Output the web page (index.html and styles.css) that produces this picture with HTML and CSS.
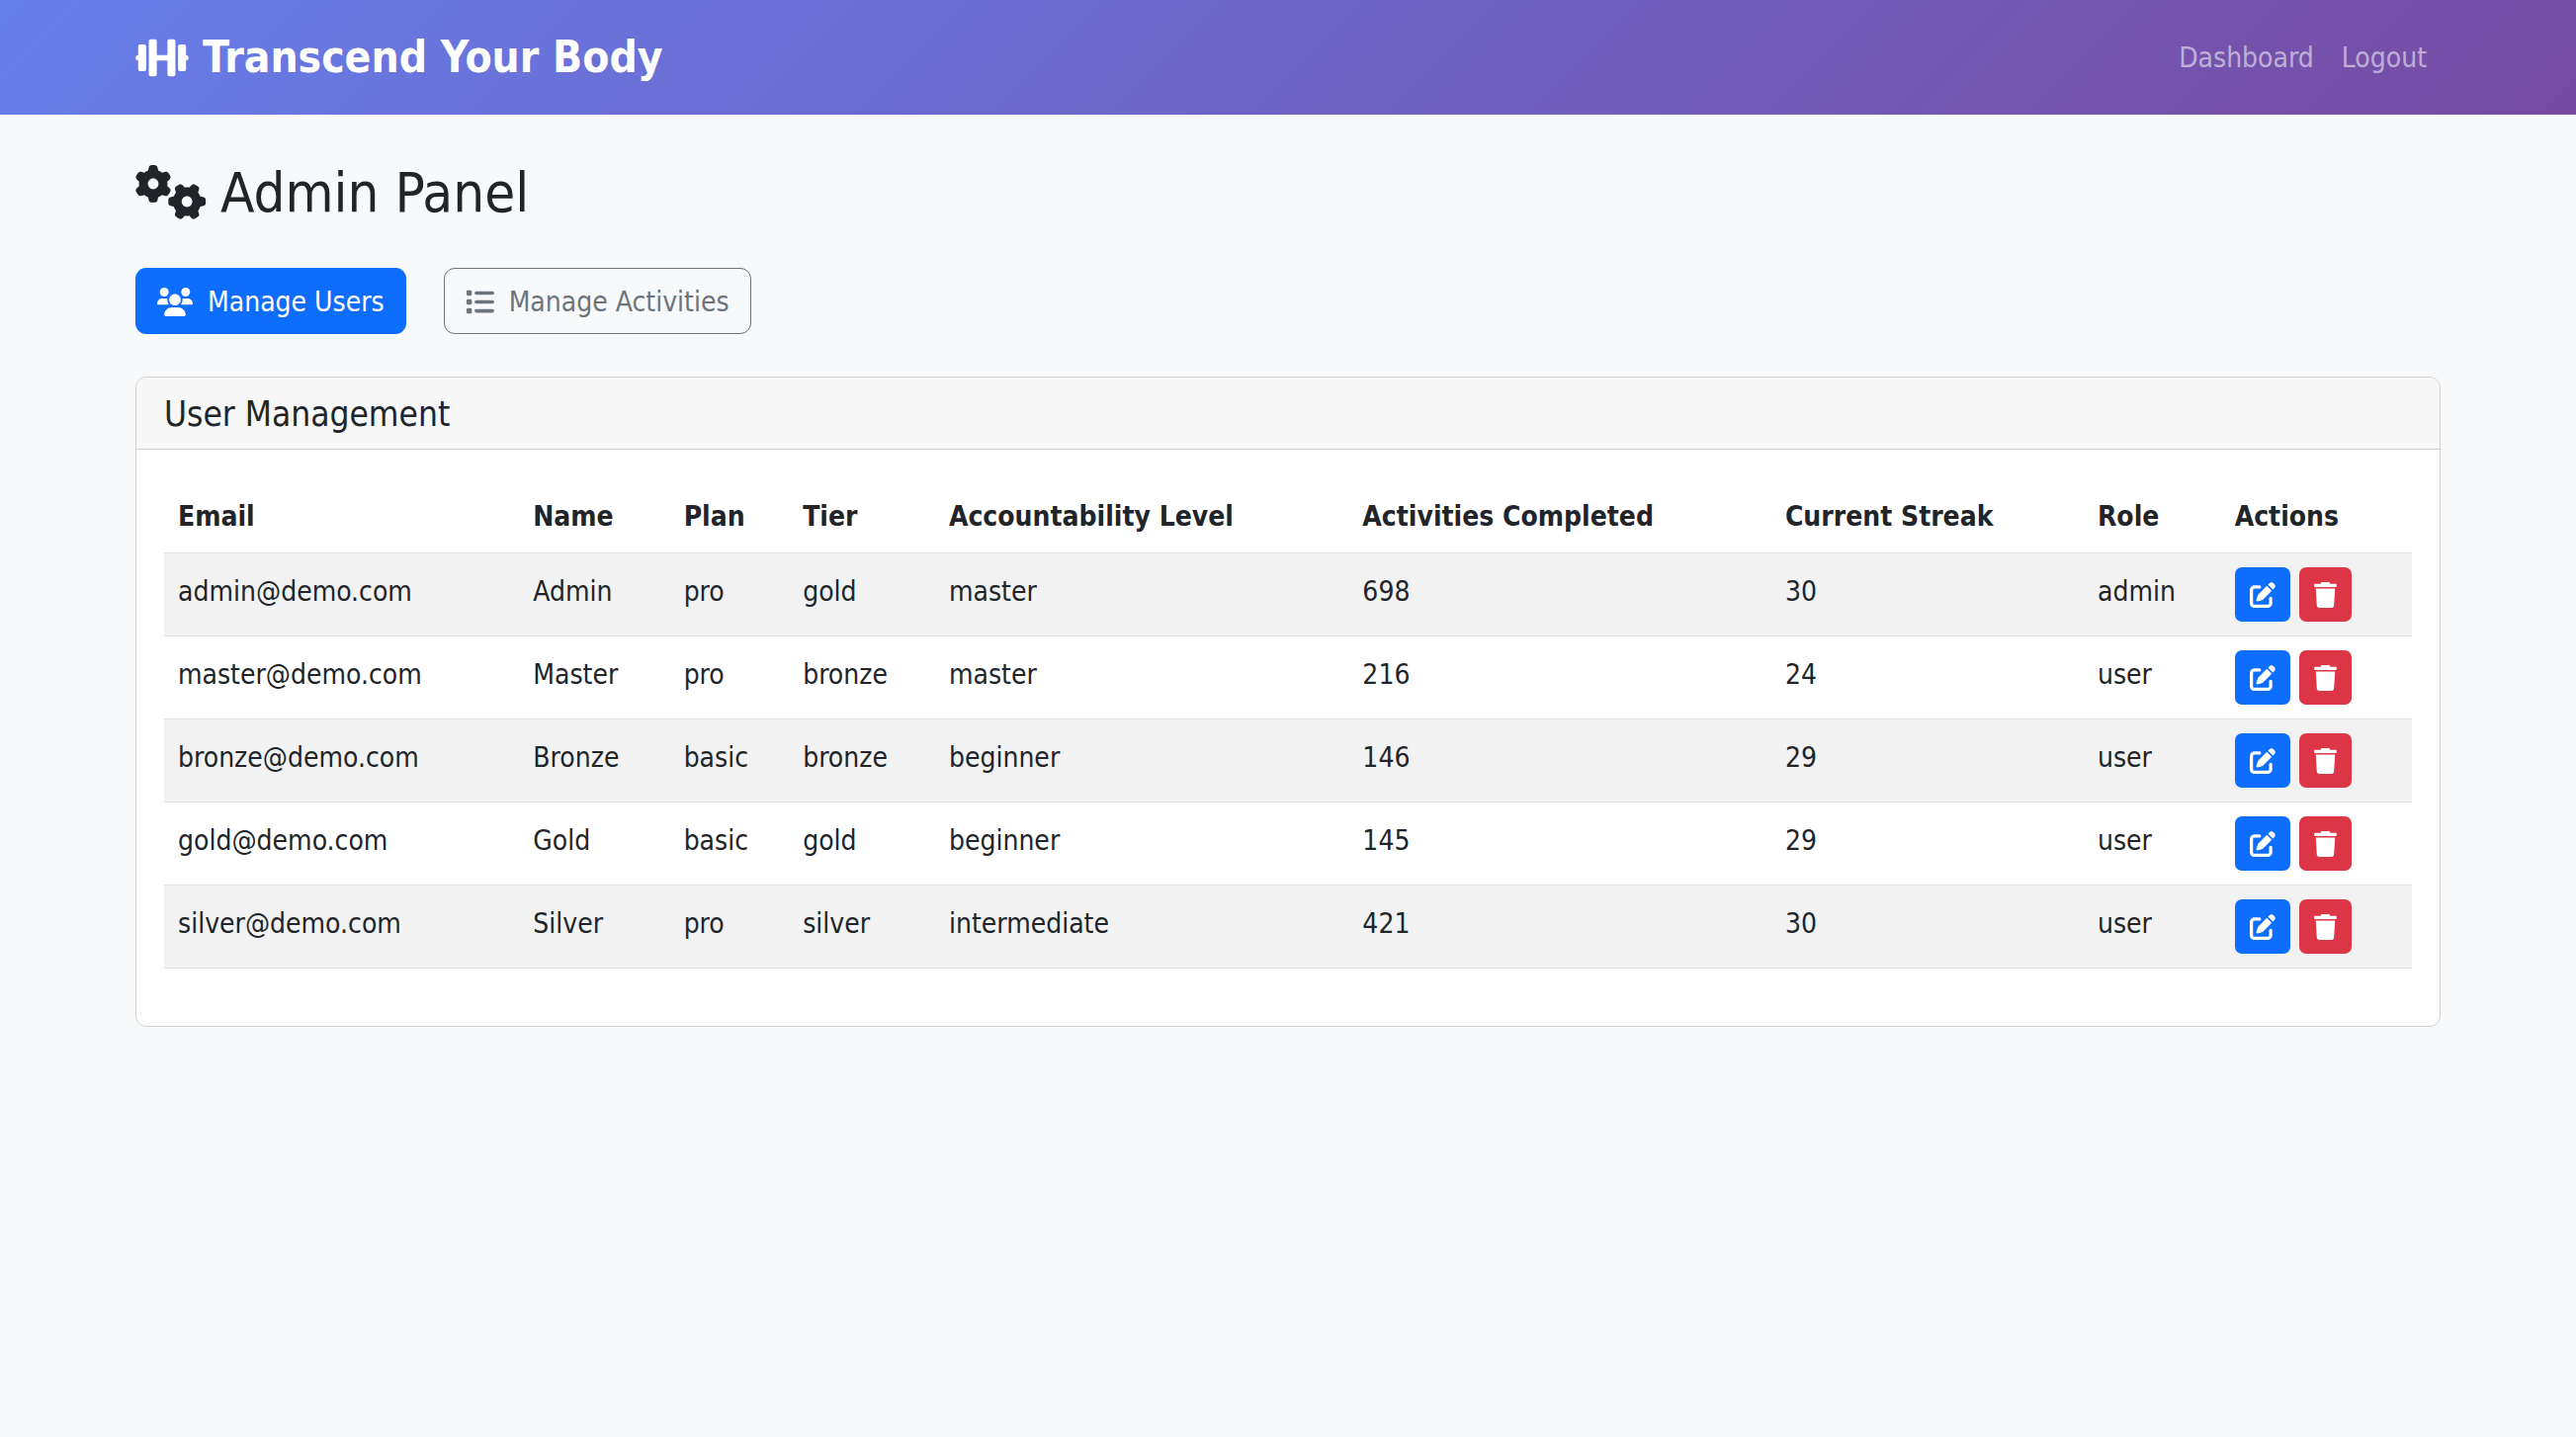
FILE: index.html
```html
<!DOCTYPE html>
<html lang="en">
<head>
<meta charset="utf-8">
<meta name="viewport" content="width=device-width, initial-scale=1">
<title>Admin Panel - Transcend Your Body</title>
<link rel="stylesheet" href="styles.css">
</head>
<body>
<svg class="sprite" aria-hidden="true">
  <symbol id="i-dumbbell" viewBox="0 0 640 512"><path d="M104 96h-48C42.75 96 32 106.8 32 120V224C14.33 224 0 238.3 0 256c0 17.67 14.33 32 32 32v104C32 405.3 42.75 416 56 416h48C117.3 416 128 405.3 128 392v-272C128 106.8 117.3 96 104 96zM456 32h-48C394.8 32 384 42.75 384 56V224H256V56C256 42.75 245.3 32 232 32h-48C170.8 32 160 42.75 160 56v400C160 469.3 170.8 480 184 480h48C245.3 480 256 469.3 256 456V288h128v168c0 13.25 10.75 24 24 24h48c13.25 0 24-10.75 24-24V56C480 42.75 469.3 32 456 32zM608 224V120C608 106.8 597.3 96 584 96h-48C522.8 96 512 106.8 512 120v272c0 13.25 10.75 24 24 24h48c13.25 0 24-10.75 24-24V288c17.67 0 32-14.33 32-32C640 238.3 625.7 224 608 224z"/></symbol>
  <symbol id="i-gears" viewBox="0 0 640 512">
    <path id="gear" d="M286.3 155.1C287.4 161.9 288 168.9 288 176C288 183.1 287.4 190.1 286.3 196.9L308.5 216.7C315.5 223 318.4 232.1 314.7 241.7C312.4 246.9 309.9 252.2 307.1 257.2L304 262.6C301 267.6 297.7 272.4 294.2 277.1C288.5 284.7 278.5 287.2 269.5 284.2L241.2 274.9C230.5 283.8 218.3 290.9 205 295.9L198.1 324.9C197 334.2 189.8 341.6 180.4 342.8C173.7 343.6 166.9 344 160 344C153.1 344 146.3 343.6 139.6 342.8C130.2 341.6 122.1 334.2 121 324.9L114.1 295.9C101.7 290.9 89.5 283.8 78.75 274.9L50.53 284.2C41.54 287.2 31.52 284.7 25.82 277.1C22.28 272.4 18.98 267.5 15.94 262.5L12.92 257.2C10.13 252.2 7.592 247 5.324 241.7C1.62 232.1 4.458 223 11.52 216.7L33.7 196.9C32.58 190.1 32 183.1 32 176C32 168.9 32.58 161.9 33.7 155.1L11.52 135.3C4.458 128.1 1.62 119 5.324 110.3C7.592 105 10.13 99.79 12.92 94.76L15.95 89.51C18.98 84.46 22.28 79.58 25.82 74.89C31.52 67.34 41.54 64.83 50.53 67.79L78.75 77.09C89.5 68.25 101.7 61.13 114.1 56.15L121 27.08C122.1 17.8 130.2 10.37 139.6 9.231C146.3 8.418 153.1 8 160 8C166.9 8 173.7 8.418 180.4 9.23C189.8 10.37 197 17.8 198.1 27.08L205 56.15C218.3 61.13 230.5 68.25 241.2 77.09L269.5 67.79C278.5 64.83 288.5 67.34 294.2 74.89C297.7 79.56 301 84.42 304 89.44L307.1 94.83C309.9 99.84 312.4 105 314.7 110.3C318.4 119 315.5 128.1 308.5 135.3L286.3 155.1zM160 128C133.5 128 112 149.5 112 176C112 202.5 133.5 224 160 224C186.5 224 208 202.5 208 176C208 149.5 186.5 128 160 128z"/>
    <use href="#gear" transform="translate(464 336) rotate(90) translate(-160 -176)"/>
  </symbol>
  <symbol id="i-users" viewBox="0 0 640 512"><path d="M320 320c57.4 0 104-46.56 104-104c0-57.44-46.6-104-104-104c-57.4 0-104 46.56-104 104C216 273.4 262.5 320 320 320zM369.9 352H270.1C191.6 352 128 411.7 128 485.3C128 500.1 140.7 512 156.4 512h327.2C499.3 512 512 500.1 512 485.3C512 411.7 448.4 352 369.9 352zM512 160c44.18 0 80-35.82 80-80S556.2 0 512 0c-44.18 0-80 35.82-80 80S467.8 160 512 160zM183.9 216c0-5.449 .9824-10.63 1.609-15.91C174.6 194.1 162.6 192 149.9 192H88.08C39.44 192 0 233.8 0 285.1C0 295.7 7.887 304 17.62 304h199.5C196.7 280.2 183.9 249.7 183.9 216zM128 160c44.18 0 80-35.82 80-80S172.2 0 128 0C83.82 0 48 35.82 48 80S83.82 160 128 160zM551.9 192h-61.84c-12.8 0-24.88 3.037-35.86 8.24C454.8 205.5 455.8 210.6 455.8 216c0 33.71-12.78 64.21-33.16 88h199.7C632.1 304 640 295.7 640 285.1C640 233.8 600.6 192 551.9 192z"/></symbol>
  <symbol id="i-list" viewBox="0 0 512 512"><path d="M40 48h48a24 24 0 0 1 24 24v48a24 24 0 0 1-24 24H40a24 24 0 0 1-24-24V72a24 24 0 0 1 24-24zM192 64h288a32 32 0 0 1 0 64H192a32 32 0 0 1 0-64zM192 224h288a32 32 0 0 1 0 64H192a32 32 0 0 1 0-64zM192 384h288a32 32 0 0 1 0 64H192a32 32 0 0 1 0-64zM40 208h48a24 24 0 0 1 24 24v48a24 24 0 0 1-24 24H40a24 24 0 0 1-24-24v-48a24 24 0 0 1 24-24zM40 368h48a24 24 0 0 1 24 24v48a24 24 0 0 1-24 24H40a24 24 0 0 1-24-24v-48a24 24 0 0 1 24-24z"/></symbol>
  <symbol id="i-edit" viewBox="0 0 512 512"><path d="M490.3 40.4C512.2 62.27 512.2 97.73 490.3 119.6L460.3 149.7L362.3 51.72L392.4 21.66C414.3-.2135 449.7-.2135 471.6 21.66L490.3 40.4zM172.4 241.7L339.7 74.34L437.7 172.3L270.3 339.6C264.2 345.8 256.7 350.4 248.4 353.2L159.6 382.8C150.1 385.6 141.5 383.4 135 376.1C128.6 370.5 126.4 361 129.2 352.4L158.8 263.6C161.6 255.3 166.2 247.8 172.4 241.7zM192 64C209.7 64 224 78.33 224 96C224 113.7 209.7 128 192 128H96C78.33 128 64 142.3 64 160V416C64 433.7 78.33 448 96 448H352C369.7 448 384 433.7 384 416V320C384 302.3 398.3 288 416 288C433.7 288 448 302.3 448 320V416C448 469 405 512 352 512H96C42.98 512 0 469 0 416V160C0 107 42.98 64 96 64H192z"/></symbol>
  <symbol id="i-trash" viewBox="0 0 448 512"><path d="M53.21 467c1.562 24.84 23.02 45 47.9 45h245.8c24.88 0 46.33-20.16 47.9-45L416 128H32L53.21 467zM432 32H320l-11.58-23.16c-2.709-5.42-8.25-8.844-14.31-8.844H153.9c-6.061 0-11.6 3.424-14.31 8.844L128 32H16c-8.836 0-16 7.162-16 16V80c0 8.836 7.164 16 16 16h416c8.838 0 16-7.164 16-16V48C448 39.16 440.8 32 432 32z"/></symbol>
</svg>

<nav class="navbar">
  <div class="container navbar-inner">
    <a class="brand" href="#"><svg class="icon brand-icon" aria-hidden="true"><use href="#i-dumbbell"/></svg>Transcend Your Body</a>
    <div class="nav-links">
      <a class="nav-link" href="#">Dashboard</a>
      <a class="nav-link" href="#">Logout</a>
    </div>
  </div>
</nav>

<main class="container main">
  <h1 class="page-title"><svg class="icon title-icon" aria-hidden="true"><use href="#i-gears"/></svg>Admin Panel</h1>

  <div class="tabs">
    <button type="button" class="btn btn-primary"><svg class="icon users-icon" aria-hidden="true"><use href="#i-users"/></svg>Manage Users</button>
    <button type="button" class="btn btn-outline"><svg class="icon list-icon" aria-hidden="true"><use href="#i-list"/></svg>Manage Activities</button>
  </div>

  <section class="card">
    <header class="card-header"><h2 class="card-title">User Management</h2></header>
    <div class="card-body">
      <table class="table">
        <colgroup>
          <col class="col-email"><col class="col-name"><col class="col-plan"><col class="col-tier"><col class="col-level"><col class="col-completed"><col class="col-streak"><col class="col-role"><col class="col-actions">
        </colgroup>
        <thead>
          <tr><th scope="col">Email</th><th scope="col">Name</th><th scope="col">Plan</th><th scope="col">Tier</th><th scope="col">Accountability Level</th><th scope="col">Activities Completed</th><th scope="col">Current Streak</th><th scope="col">Role</th><th scope="col">Actions</th></tr>
        </thead>
        <tbody>
          <tr><td>admin@demo.com</td><td>Admin</td><td>pro</td><td>gold</td><td>master</td><td>698</td><td>30</td><td>admin</td>
            <td><div class="actions"><button type="button" class="btn-sm btn-primary" aria-label="Edit Admin"><svg class="icon edit-icon"><use href="#i-edit"/></svg></button><button type="button" class="btn-sm btn-danger" aria-label="Delete Admin"><svg class="icon trash-icon"><use href="#i-trash"/></svg></button></div></td></tr>
          <tr><td>master@demo.com</td><td>Master</td><td>pro</td><td>bronze</td><td>master</td><td>216</td><td>24</td><td>user</td>
            <td><div class="actions"><button type="button" class="btn-sm btn-primary" aria-label="Edit Master"><svg class="icon edit-icon"><use href="#i-edit"/></svg></button><button type="button" class="btn-sm btn-danger" aria-label="Delete Master"><svg class="icon trash-icon"><use href="#i-trash"/></svg></button></div></td></tr>
          <tr><td>bronze@demo.com</td><td>Bronze</td><td>basic</td><td>bronze</td><td>beginner</td><td>146</td><td>29</td><td>user</td>
            <td><div class="actions"><button type="button" class="btn-sm btn-primary" aria-label="Edit Bronze"><svg class="icon edit-icon"><use href="#i-edit"/></svg></button><button type="button" class="btn-sm btn-danger" aria-label="Delete Bronze"><svg class="icon trash-icon"><use href="#i-trash"/></svg></button></div></td></tr>
          <tr><td>gold@demo.com</td><td>Gold</td><td>basic</td><td>gold</td><td>beginner</td><td>145</td><td>29</td><td>user</td>
            <td><div class="actions"><button type="button" class="btn-sm btn-primary" aria-label="Edit Gold"><svg class="icon edit-icon"><use href="#i-edit"/></svg></button><button type="button" class="btn-sm btn-danger" aria-label="Delete Gold"><svg class="icon trash-icon"><use href="#i-trash"/></svg></button></div></td></tr>
          <tr><td>silver@demo.com</td><td>Silver</td><td>pro</td><td>silver</td><td>intermediate</td><td>421</td><td>30</td><td>user</td>
            <td><div class="actions"><button type="button" class="btn-sm btn-primary" aria-label="Edit Silver"><svg class="icon edit-icon"><use href="#i-edit"/></svg></button><button type="button" class="btn-sm btn-danger" aria-label="Delete Silver"><svg class="icon trash-icon"><use href="#i-trash"/></svg></button></div></td></tr>
        </tbody>
      </table>
    </div>
  </section>
</main>
</body>
</html>
```
FILE: styles.css
```css
*, *::before, *::after { box-sizing: border-box; }

body {
  margin: 0;
  background: #f8f9fa;
  color: #212529;
  font-family: Tahoma, "DejaVu Sans Condensed", "DejaVu Sans", sans-serif;
  font-size: 28px;
  line-height: 45px;
}

.sprite { display: none; }
.icon { flex: none; display: block; fill: currentColor; }

.container {
  width: 100%;
  max-width: 2376px;
  margin: 0 auto;
  padding: 0 22px;
}

/* Top bar */
.navbar {
  padding: 14px 0;
  background: linear-gradient(135deg, #667eea 0%, #764ba2 100%);
}
.navbar-inner { display: flex; align-items: center; justify-content: space-between; }
.brand {
  display: flex;
  align-items: center;
  gap: 14px;
  padding: 11px 0;
  color: #fff;
  font-size: 44px;
  font-weight: 700;
  line-height: 66px;
  text-decoration: none;
}
.brand-icon { width: 54px; height: 43px; }
.nav-links { display: flex; }
.nav-link { padding: 14px; color: rgba(255, 255, 255, .55); text-decoration: none; }

/* Page heading and tabs */
.main { padding-top: 43px; padding-bottom: 43px; }
.page-title {
  display: flex;
  align-items: center;
  gap: 14px;
  margin: 0 0 41px;
  font-size: 56px;
  font-weight: 400;
  line-height: 71px;
}
.title-icon { width: 72px; height: 58px; }
.tabs { display: flex; gap: 38px; margin-bottom: 43px; }

.btn, .btn-sm {
  display: flex;
  align-items: center;
  border: 1px solid transparent;
  font: inherit;
  cursor: pointer;
}
.btn { gap: 15px; padding: 11px 21px 9px; border-radius: 11px; }
.btn-sm { height: 55px; padding: 0 14px; border-radius: 7px; }
.btn-primary { background: #0d6efd; color: #fff; }
.btn-danger { background: #dc3545; color: #fff; }
.btn-outline { background: transparent; border-color: #6c757d; color: #6c757d; }
.users-icon { width: 36px; height: 29px; }
.list-icon { width: 29px; height: 29px; }
.edit-icon { width: 26px; height: 26px; }
.trash-icon { width: 23px; height: 26px; }

/* User table card */
.card {
  overflow: hidden;
  background: #fff;
  border: 1px solid #d0d1d2;
  border-radius: 11px;
}
.card-header {
  padding: 14px 28px 11px;
  background: #f7f7f7;
  border-bottom: 1px solid #cfcfcf;
}
.card-title { margin: 0; font-size: 35px; font-weight: 400; line-height: 47px; }
.card-body { padding: 29px 28px; }
.table {
  width: 100%;
  margin-bottom: 29px;
  border-collapse: separate;
  border-spacing: 0;
  table-layout: fixed;
  line-height: 49px;
}
.table th, .table td {
  padding: 14px;
  border-bottom: 1px solid #dee0e2;
  text-align: left;
  vertical-align: top;
  white-space: nowrap;
}
.table th { padding-bottom: 12px; font-weight: 700; }
.table tbody tr:nth-child(odd) { background: #f2f2f2; }
.actions { display: flex; gap: 9px; }

.col-email { width: 15.8%; }
.col-name { width: 6.7%; }
.col-plan { width: 5.3%; }
.col-tier { width: 6.5%; }
.col-level { width: 18.4%; }
.col-completed { width: 18.8%; }
.col-streak { width: 13.9%; }
.col-role { width: 6.1%; }
.col-actions { width: 8.5%; }
```
